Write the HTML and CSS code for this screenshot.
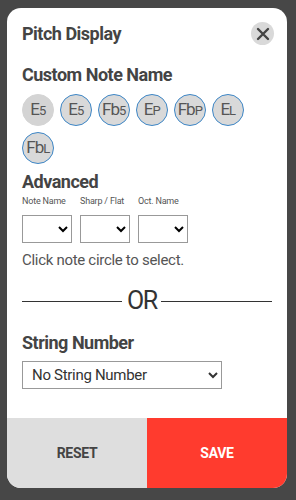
FILE: index.html
```html
<!DOCTYPE html>
<html lang="en">
<head>
    <meta charset="UTF-8">
    <meta name="viewport" content="width=device-width, initial-scale=1.0">
    <title>Pitch Display</title>
    <link rel="stylesheet" href="styles.css">
</head>
<body>
    <div class="modal">
        <div class="modal-body">
            <div class="modal-head">
                <h2>Pitch Display</h2>
                <button class="close-btn" aria-label="Close">
                    <svg width="14" height="14" viewBox="0 0 14 14">
                        <path d="M2 2 L12 12 M12 2 L2 12" stroke="#444" stroke-width="2.4" stroke-linecap="round"/>
                    </svg>
                </button>
            </div>

            <h3>Custom Note Name</h3>
            <div class="notes">
                <button class="note selected">E<small>5</small></button>
                <button class="note">E<small>5</small></button>
                <button class="note">Fb<small>5</small></button>
                <button class="note">E<small>P</small></button>
                <button class="note">Fb<small>P</small></button>
                <button class="note">E<small>L</small></button>
                <button class="note">Fb<small>L</small></button>
            </div>

            <h3>Advanced</h3>
            <div class="advanced">
                <label class="field">
                    <span>Note Name</span>
                    <select><option></option></select>
                </label>
                <label class="field">
                    <span>Sharp / Flat</span>
                    <select><option></option></select>
                </label>
                <label class="field">
                    <span>Oct. Name</span>
                    <select><option></option></select>
                </label>
            </div>
            <p class="hint">Click note circle to select.</p>

            <div class="or-line"><span>OR</span></div>

            <h3>String Number</h3>
            <select class="string-select">
                <option>No String Number</option>
            </select>
        </div>

        <div class="modal-foot">
            <button class="reset">RESET</button>
            <button class="save">SAVE</button>
        </div>
    </div>
</body>
</html>
```

FILE: styles.css
```css
body {
    margin: 0;
    padding: 8px 9px 12px 7px;
    background: #474747;
    font-family: 'Roboto', sans-serif;
    color: #444;
}

.modal {
    width: 280px;
    height: 480px;
    background: #fff;
    border-radius: 14px;
    overflow: hidden;
    display: flex;
    flex-direction: column;
}

.modal-body {
    flex: 1;
    padding: 14px 15px 0 15px;
}

.modal-head {
    display: flex;
    justify-content: space-between;
    align-items: center;
}

h2 {
    margin: 0;
    font-size: 18px;
    font-weight: bold;
    letter-spacing: -0.5px;
}

.close-btn {
    width: 23px;
    height: 23px;
    border: none;
    border-radius: 50%;
    background: #d9d9d9;
    padding: 0;
    margin-right: -2px;
    display: flex;
    align-items: center;
    justify-content: center;
    cursor: pointer;
}

h3 {
    margin: 0;
    font-size: 18px;
    font-weight: bold;
    letter-spacing: -0.5px;
}

.modal-head + h3 {
    margin-top: 19px;
}

.notes {
    display: flex;
    flex-wrap: wrap;
    gap: 6px;
    margin-top: 9px;
}

.note {
    width: 32px;
    height: 32px;
    border-radius: 50%;
    border: 1.5px solid #3d86c6;
    background: #d9d9d9;
    color: #555;
    font-family: 'Roboto', sans-serif;
    font-size: 17px;
    font-weight: normal;
    padding: 0;
    display: flex;
    align-items: baseline;
    justify-content: center;
    line-height: 29px;
    letter-spacing: -1px;
}

.note small {
    font-size: 13px;
    letter-spacing: -0.5px;
}

.note.selected {
    border-color: #d4d4d4;
    background: #d4d4d4;
}

.notes + h3 {
    margin-top: 7px;
}

.advanced {
    display: flex;
    gap: 8px;
    margin-top: 4px;
}

.field {
    display: flex;
    flex-direction: column;
    width: 50px;
}

.field span {
    font-size: 9px;
    color: #555;
    white-space: nowrap;
    height: 14px;
    letter-spacing: -0.2px;
}

.field select {
    width: 50px;
    height: 28px;
    margin-top: 5px;
    border: 1px solid #999;
    border-radius: 0;
    background: #fff;
}

.hint {
    margin: 8px 0 0 0;
    font-size: 15px;
    color: #555;
    letter-spacing: -0.3px;
}

.or-line {
    display: flex;
    align-items: center;
    margin-top: 17px;
    color: #333;
    font-size: 25px;
    line-height: 30px;
}

.or-line span {
    letter-spacing: -1.5px;
    margin: 0 4px 0 5px;
}

.or-line::before,
.or-line::after {
    content: "";
    flex: 1;
    height: 1px;
    background: #333;
}

.or-line::before {
    flex: 0 0 100px;
}

.or-line + h3 {
    margin-top: 16px;
}

.string-select {
    margin-top: 8px;
    width: 200px;
    height: 28px;
    border: 1px solid #999;
    border-radius: 0;
    background: #fff;
    font-family: 'Roboto', sans-serif;
    font-size: 15px;
    color: #333;
    padding-left: 5px;
    letter-spacing: -0.3px;
}

.modal-foot {
    display: flex;
    height: 70px;
}

.modal-foot button {
    flex: 1;
    border: none;
    font-family: 'Roboto', sans-serif;
    font-size: 14px;
    font-weight: bold;
    letter-spacing: -0.3px;
}

.reset {
    background: #dedede;
    color: #444;
}

.save {
    background: #ff3b2e;
    color: #fff;
}
```
